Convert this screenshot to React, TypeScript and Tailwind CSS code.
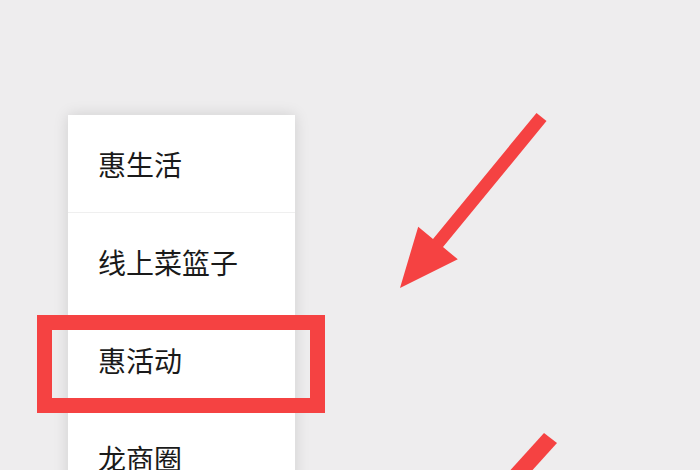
const items = ["惠生活", "线上菜篮子", "惠活动", "龙商圈"];

function Arrows() {
  return (
    <svg className="absolute left-0 top-0" width="700" height="470" viewBox="0 0 700 470">
      <polygon
        fill="#f54242"
        points="536.5,112.9 546.5,121.1 443,247.1 457.8,259.3 400,288 418.2,226.7 433,238.9"
      />
      <polygon fill="#f54242" points="544,433 557,443 526.9,476.3 503.8,477.4" />
    </svg>
  );
}

export default function App() {
  return (
    <div
      className="relative w-[700px] h-[470px] overflow-hidden bg-[#eeedee]"
      style={{ fontFamily: '"Noto Sans CJK SC", "Noto Sans", sans-serif' }}
    >
      <div className="ml-[68px] mt-[115px] w-[227px] bg-white shadow-[0_0_14px_rgba(0,0,0,0.13)]">
        {items.map((label, i) => (
          <div
            key={label}
            className={
              "h-[98px] flex items-center pl-[30px] text-[28px] text-[#1a1a1a] " +
              (i === 0 ? "border-b border-[#efefef]" : "")
            }
          >
            {label}
          </div>
        ))}
      </div>

      {/* highlight box */}
      <div className="absolute left-[37px] top-[315px] w-[288px] h-[98px] border-[15px] border-[#f54242]" />

      <Arrows />
    </div>
  );
}
